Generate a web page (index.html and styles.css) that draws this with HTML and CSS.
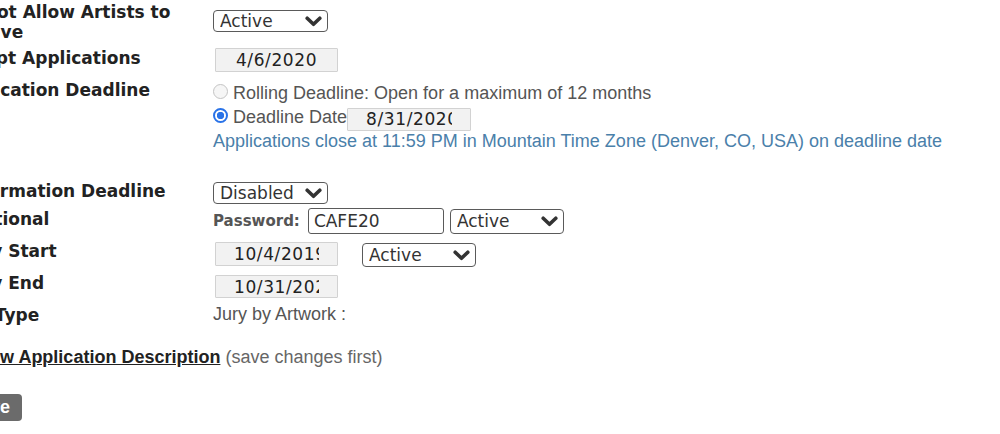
FILE: index.html
```html
<!DOCTYPE html>
<html lang="en">
<head>
<meta charset="utf-8">
<title>Call Settings</title>
<link rel="stylesheet" href="styles.css">
</head>
<body>
<form class="form">
  <div class="row r1">
    <div class="label">Do Not Allow Artists to Archive</div>
    <div class="value v1">
      <span class="sel w115 h22">
        <select class="select"><option>Active</option><option>Disabled</option></select>
        <svg class="chev" width="17" height="11" viewBox="0 0 17 11"><polyline points="2.2,2.2 8.5,8.3 14.8,2.2" fill="none" stroke="#333" stroke-width="3.6" stroke-linecap="round" stroke-linejoin="round"/></svg>
      </span>
    </div>
  </div>

  <div class="row r2">
    <div class="label">Accept Applications</div>
    <div class="value v2">
      <input class="date" type="text" value="4/6/2020">
    </div>
  </div>

  <div class="row r3">
    <div class="label">Application Deadline</div>
    <div class="value v3">
      <label class="opt"><input class="radio" type="radio" name="deadline"><span>Rolling Deadline: Open for a maximum of 12 months</span></label>
      <label class="opt"><input class="radio" type="radio" name="deadline" checked><span>Deadline Date</span><input class="date dl" type="text" value="8/31/2020"></label>
      <div class="note">Applications close at 11:59 PM in Mountain Time Zone (Denver, CO, USA) on deadline date</div>
    </div>
  </div>

  <div class="row r4">
    <div class="label">Confirmation Deadline</div>
    <div class="value v4">
      <span class="sel w115 h22">
        <select class="select"><option>Disabled</option><option>Active</option></select>
        <svg class="chev" width="17" height="11" viewBox="0 0 17 11"><polyline points="2.2,2.2 8.5,8.3 14.8,2.2" fill="none" stroke="#333" stroke-width="3.6" stroke-linecap="round" stroke-linejoin="round"/></svg>
      </span>
    </div>
  </div>

  <div class="row r5">
    <div class="label">Additional</div>
    <div class="value v5">
      <span class="pw-label">Password:</span>
      <input class="pw" type="text" value="CAFE20">
      <span class="sel w114 h25 ml6">
        <select class="select"><option>Active</option><option>Disabled</option></select>
        <svg class="chev" width="17" height="11" viewBox="0 0 17 11"><polyline points="2.2,2.2 8.5,8.3 14.8,2.2" fill="none" stroke="#333" stroke-width="3.6" stroke-linecap="round" stroke-linejoin="round"/></svg>
      </span>
    </div>
  </div>

  <div class="row r6">
    <div class="label">Entry Start</div>
    <div class="value v6">
      <input class="date" type="text" value="10/4/2019">
      <span class="sel w114 h24 ml24">
        <select class="select"><option>Active</option><option>Disabled</option></select>
        <svg class="chev" width="17" height="11" viewBox="0 0 17 11"><polyline points="2.2,2.2 8.5,8.3 14.8,2.2" fill="none" stroke="#333" stroke-width="3.6" stroke-linecap="round" stroke-linejoin="round"/></svg>
      </span>
    </div>
  </div>

  <div class="row r7">
    <div class="label">Entry End</div>
    <div class="value v7">
      <input class="date" type="text" value="10/31/2020">
    </div>
  </div>

  <div class="row r8">
    <div class="label">Jury Type</div>
    <div class="value v8">Jury by Artwork :</div>
  </div>

  <p class="preview"><a class="preview-link" href="#">Preview Application Description</a> (save changes first)</p>

  <button class="save" type="button">Save</button>
</form>
</body>
</html>
```

FILE: styles.css
```css
html, body {
  margin: 0;
  padding: 0;
  background: #ffffff;
}

body {
  width: 1000px;
  height: 434px;
  overflow: hidden;
}

.form {
  margin: 0 0 0 -49px;
  padding-top: 2px;
  font-family: "Liberation Sans", Arial, sans-serif;
}

.row {
  display: flex;
  align-items: flex-start;
}

.label {
  width: 262px;
  flex: none;
  font-family: "DejaVu Sans", Verdana, sans-serif;
  font-weight: bold;
  font-size: 17px;
  line-height: 20px;
  color: #222;
}

.value {
  font-family: "Liberation Sans", Arial, sans-serif;
  font-size: 18px;
  color: #555;
}

/* row spacing */
.r2 { margin-top: 6px; }
.r3 { margin-top: 8px; }
.r4 { margin-top: 28px; }
.r5 { margin-top: 5px; }
.r6 { margin-top: 7px; }
.r7 { margin-top: 6px; }
.r8 { margin-top: 7px; }

.v1 { margin-top: 8px; }
.v4 { margin-top: 1px; }

/* selects */
.sel {
  position: relative;
  display: inline-flex;
  flex: none;
}

.select {
  appearance: none;
  -webkit-appearance: none;
  width: 100%;
  height: 100%;
  margin: 0;
  padding: 0 0 0 6px;
  border: 1px solid #5a5a5a;
  border-radius: 4px;
  background: #fff;
  font-family: "DejaVu Sans", Verdana, sans-serif;
  font-size: 17px;
  color: #333;
  box-sizing: border-box;
}

.chev {
  position: absolute;
  right: 6px;
  top: 50%;
  margin-top: -5px;
  pointer-events: none;
}

.w115 { width: 115px; }
.w114 { width: 114px; }
.h22 { height: 22px; }
.h24 { height: 24px; }
.h25 { height: 25px; }
.ml6 { margin-left: 6px; }
.ml24 { margin-left: 24px; }

/* date inputs */
.date {
  box-sizing: border-box;
  width: 123px;
  height: 24px;
  margin: 0 0 0 2px;
  padding: 0 18px;
  border: 1px solid #d2d2d2;
  border-radius: 1px;
  background: #f2f2f2;
  font-family: "DejaVu Sans", Verdana, sans-serif;
  font-size: 17px;
  letter-spacing: 0.6px;
  color: #222;
  text-align: center;
  outline: none;
}

.v2 .date { display: block; }

/* deadline options */
.v3 {
  margin-top: 1px;
}

.opt {
  display: flex;
  align-items: center;
  height: 24px;
  line-height: 24px;
  white-space: nowrap;
}

.radio {
  appearance: none;
  -webkit-appearance: none;
  box-sizing: border-box;
  width: 15px;
  height: 15px;
  margin: 0 5px 3px 0;
  border: 1px solid #c4c4c4;
  border-radius: 50%;
  background: #f6f6f6;
  flex: none;
}

.radio:checked {
  border: 2px solid #2a73e8;
  background: radial-gradient(circle, #2a73e8 0 3.4px, #fff 4px 100%);
}

.date.dl {
  margin: 4px 0 0 0;
  height: 23px;
  width: 124px;
}

.note {
  height: 24px;
  line-height: 24px;
  color: #4a80aa;
  white-space: nowrap;
}

/* password row */
.v5 {
  display: flex;
  align-items: center;
  height: 26px;
  margin-top: -1px;
}

.pw-label {
  font-family: "DejaVu Sans", Verdana, sans-serif;
  font-weight: bold;
  font-size: 15px;
  color: #555;
}

.pw {
  box-sizing: border-box;
  width: 136px;
  height: 26px;
  margin: 0 0 0 8px;
  padding: 0 5px;
  border: 1px solid #5a5a5a;
  border-radius: 3px;
  background: #fff;
  font-family: "DejaVu Sans", Verdana, sans-serif;
  font-size: 17px;
  color: #333;
  outline: none;
}

.v6 {
  display: flex;
  align-items: flex-start;
  margin-top: 1px;
}

.v6 .sel { margin-top: 1px; }

.v7 {
  margin-top: 2px;
}

.v7 .date {
  display: block;
  height: 23px;
}

.v8 {
  line-height: 20px;
  margin-top: -1px;
}

/* preview link */
.preview {
  margin: 21px 0 0 -5px;
  font-size: 18px;
  line-height: 22px;
  color: #666;
}

.preview-link {
  color: #222;
  font-weight: bold;
  text-decoration: underline;
}

/* save button */
.save {
  display: block;
  margin: 26px 0 0 5px;
  height: 27px;
  padding: 0 12px;
  border: 0;
  border-radius: 4px;
  background: #6b6b6b;
  color: #fff;
  font-family: "Liberation Sans", Arial, sans-serif;
  font-weight: bold;
  font-size: 18px;
}
```
